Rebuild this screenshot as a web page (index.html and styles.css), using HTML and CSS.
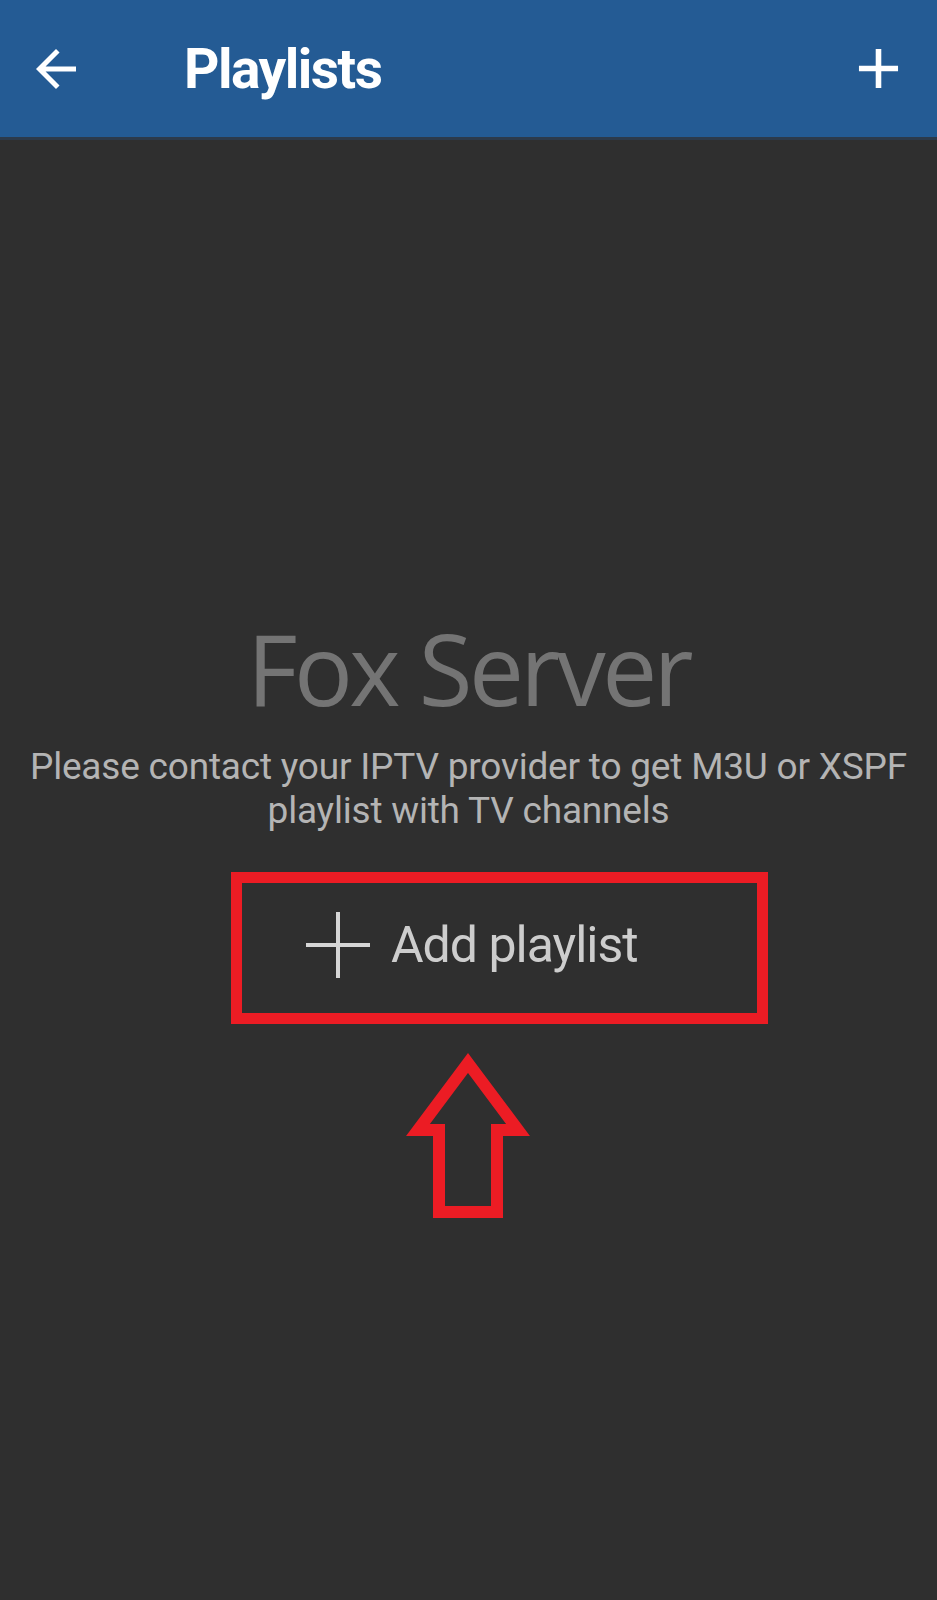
FILE: index.html
```html
<!DOCTYPE html>
<html lang="en">
<head>
<meta charset="utf-8">
<title>Playlists</title>
<link rel="stylesheet" href="styles.css">
</head>
<body>
<header class="appbar">
  <svg class="back" viewBox="0 0 24 24" aria-hidden="true"><path d="M20 11H7.83l5.59-5.59L12 4l-8 8 8 8 1.41-1.41L7.83 13H20v-2z" fill="#fff"/></svg>
  <h1 class="title">Playlists</h1>
  <svg class="add" viewBox="0 0 24 24" aria-hidden="true"><path d="M19 13h-6v6h-2v-6H5v-2h6V5h2v6h6v2z" fill="#fff"/></svg>
</header>
<main class="empty">
  <div class="brand">Fox Server</div>
  <p class="hint">Please contact your IPTV provider to get M3U or XSPF<br>playlist with TV channels</p>
  <div class="add-btn">
    <svg class="plus" viewBox="0 0 64 66" aria-hidden="true"><path d="M32 0V66M0 33H64" stroke="#d6d6d6" stroke-width="4"/></svg>
    <span class="add-label">Add playlist</span>
  </div>
  <svg class="pointer" viewBox="0 0 135 175" aria-hidden="true"><polygon points="67,14 117,81 96,81 96,163 38,163 38,81 17,81" fill="none" stroke="#ec1c24" stroke-width="12" stroke-linejoin="miter"/></svg>
</main>
</body>
</html>
```
FILE: styles.css
```css
html, body {
  margin: 0;
  padding: 0;
}
body {
  background: #2f2f2f;
  width: 937px;
  height: 1600px;
  overflow: hidden;
  font-family: Roboto, "Liberation Sans", sans-serif;
}
.appbar {
  display: flex;
  align-items: center;
  height: 137px;
  background: #245b94;
  border-bottom: 3px solid #2c3a4b;
  padding: 0 25px 0 26px;
  box-sizing: content-box;
}
.back {
  width: 60px;
  height: 60px;
  flex: none;
}
.title {
  margin: 0 0 0 98px;
  color: #fff;
  font-size: 55px;
  font-weight: 700;
  letter-spacing: -1.5px;
}
.add {
  margin-left: auto;
  width: 67px;
  height: 67px;
  flex: none;
}
.empty {
  display: flex;
  flex-direction: column;
  align-items: center;
}
.brand {
  margin-top: 479px;
  font-family: "Open Sans", sans-serif;
  font-size: 98px;
  line-height: 1;
  color: #747474;
  letter-spacing: -3.6px;
}
.hint {
  margin: 28px 0 0;
  text-align: center;
  color: #b4b4b4;
  font-size: 37px;
  line-height: 44px;
  letter-spacing: -0.2px;
}
.add-btn {
  display: flex;
  align-items: center;
  box-sizing: border-box;
  width: 537px;
  height: 152px;
  margin: 39px 0 0 62px;
  border: 11px solid #ec1c24;
  padding-left: 64px;
  padding-bottom: 6px;
}
.plus {
  width: 64px;
  height: 66px;
  flex: none;
}
.add-label {
  margin-left: 21px;
  color: #cdcdcd;
  font-size: 50px;
  letter-spacing: -1px;
}
.pointer {
  width: 135px;
  height: 175px;
  margin-top: 25px;
}
```
